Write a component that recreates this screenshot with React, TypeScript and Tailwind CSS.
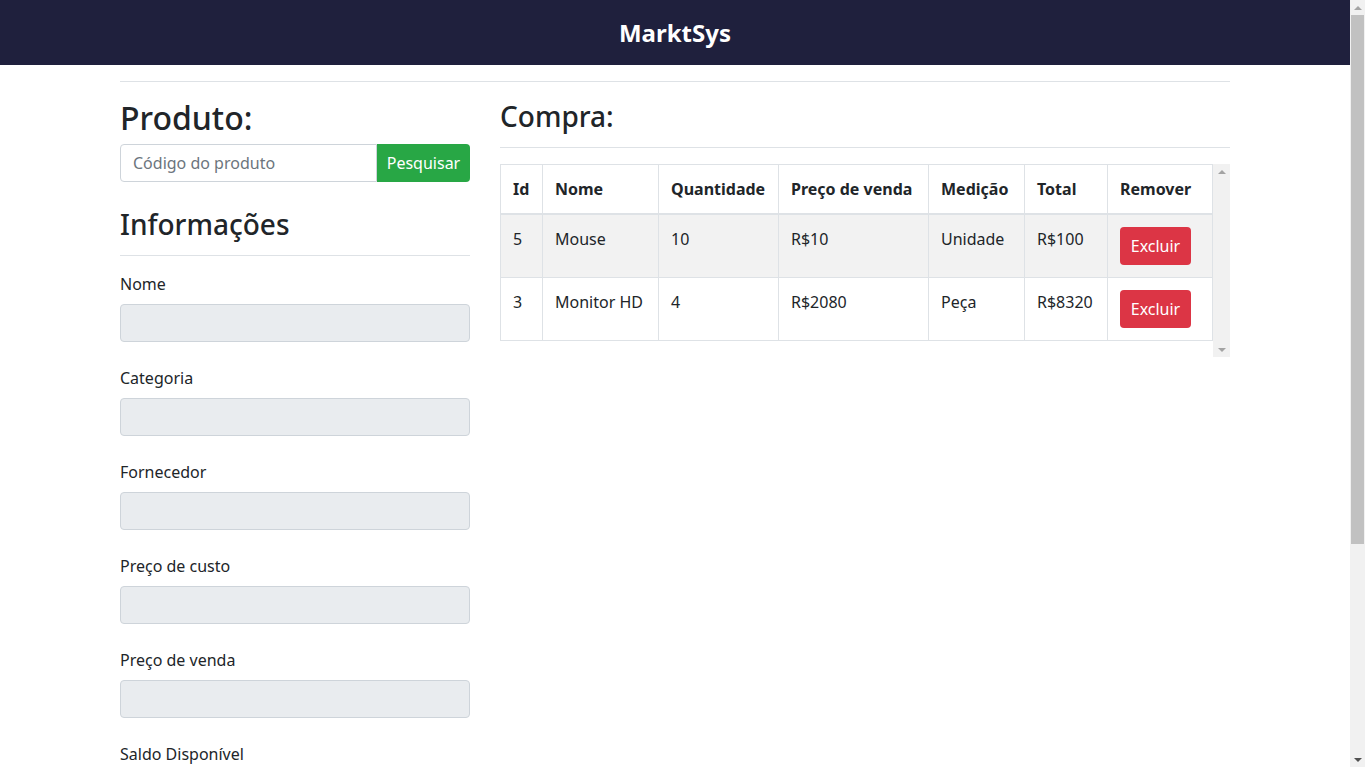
const campos = ['Nome', 'Categoria', 'Fornecedor', 'Preço de custo', 'Preço de venda', 'Saldo Disponível'];

const itens = [
  { id: 5, nome: 'Mouse', qtd: 10, preco: 'R$10', medicao: 'Unidade', total: 'R$100' },
  { id: 3, nome: 'Monitor HD', qtd: 4, preco: 'R$2080', medicao: 'Peça', total: 'R$8320' },
];

// barra de rolagem clássica (o navegador headless esconde a nativa)
function Scrollbar({ thumb, dark }: { thumb?: boolean; dark?: boolean }) {
  return (
    <div className="w-full h-full bg-[#f1f1f1] flex flex-col items-center">
      <div className="h-[15px] flex items-center justify-center">
        <div className="w-0 h-0 border-x-[4px] border-x-transparent border-b-[4px] border-b-[#a3a3a3]" />
      </div>
      <div className="flex-1 w-full px-px">
        {thumb && <div className="h-[529px] bg-[#c1c1c1]" />}
      </div>
      <div className="h-[15px] flex items-center justify-center">
        <div className={`w-0 h-0 border-x-[4px] border-x-transparent border-t-[4px] ${dark ? 'border-t-[#505050]' : 'border-t-[#a3a3a3]'}`} />
      </div>
    </div>
  );
}

function App() {
  return (
    <div className="h-screen flex overflow-hidden bg-white text-[#212529] font-['Noto_Sans',sans-serif]">
      <div className="flex-1 overflow-hidden">
        <header className="h-[65px] bg-[#1f203d] flex items-center justify-center">
          <h1 className="text-[24px] font-bold text-white">MarktSys</h1>
        </header>

        <div className="w-[1110px] mx-auto">
          <hr className="mt-4 border-t border-[#dee2e6]" />

          <div className="flex gap-[30px]">
            {/* coluna do produto */}
            <div className="w-[350px] shrink-0">
              <h2 className="mt-[17px] text-[32px] leading-[38px] font-medium">Produto:</h2>
              <div className="flex mt-[7px]">
                <input
                  placeholder="Código do produto"
                  className="w-[257px] h-[38px] px-3 border border-[#ced4da] rounded-l-[4px] text-base placeholder:text-[#6c757d] outline-none"
                />
                <button className="w-[93px] h-[38px] bg-[#28a745] text-white rounded-r-[4px] text-base">Pesquisar</button>
              </div>

              <h3 className="mt-[25px] text-[28px] leading-[34px] font-medium">Informações</h3>
              <hr className="mt-[14px] border-t border-[#dee2e6]" />

              <div className="mt-[16px] flex flex-col gap-6">
                {campos.map((c) => (
                  <div key={c}>
                    <label className="block text-base leading-6 mb-2">{c}</label>
                    <input
                      disabled
                      className="w-full h-[38px] bg-[#e9ecef] border border-[#ced4da] rounded-[4px]"
                    />
                  </div>
                ))}
              </div>
            </div>

            {/* coluna da compra */}
            <div className="w-[730px]">
              <h3 className="mt-[17px] text-[28px] leading-[34px] font-medium">Compra:</h3>
              <hr className="mt-[14px] border-t border-[#dee2e6]" />

              <div className="mt-4 h-[193px] flex">
                <div className="w-[713px] overflow-hidden">
                  <table className="border-collapse text-base w-[712px] table-fixed">
                    <colgroup>
                      <col className="w-[42px]" />
                      <col className="w-[116px]" />
                      <col className="w-[120px]" />
                      <col className="w-[150px]" />
                      <col className="w-[96px]" />
                      <col className="w-[83px]" />
                      <col className="w-[105px]" />
                    </colgroup>
                    <thead>
                      <tr>
                        {['Id', 'Nome', 'Quantidade', 'Preço de venda', 'Medição', 'Total', 'Remover'].map((h) => (
                          <th key={h} className="text-left font-bold p-3 leading-6 border border-[#dee2e6] border-b-2 whitespace-nowrap">
                            {h}
                          </th>
                        ))}
                      </tr>
                    </thead>
                    <tbody>
                      {itens.map((it, i) => (
                        <tr key={it.id} className={i % 2 === 0 ? 'bg-[#f2f2f2]' : ''}>
                          <td className="p-3 align-top leading-6 border border-[#dee2e6]">{it.id}</td>
                          <td className="p-3 align-top leading-6 border border-[#dee2e6]">{it.nome}</td>
                          <td className="p-3 align-top leading-6 border border-[#dee2e6]">{it.qtd}</td>
                          <td className="p-3 align-top leading-6 border border-[#dee2e6]">{it.preco}</td>
                          <td className="p-3 align-top leading-6 border border-[#dee2e6]">{it.medicao}</td>
                          <td className="p-3 align-top leading-6 border border-[#dee2e6]">{it.total}</td>
                          <td className="p-3 align-top leading-6 border border-[#dee2e6]">
                            <button className="h-[38px] w-[71px] bg-[#dc3545] text-white rounded-[4px]">Excluir</button>
                          </td>
                        </tr>
                      ))}
                    </tbody>
                  </table>
                </div>
                <div className="w-[17px]">
                  <Scrollbar />
                </div>
              </div>
            </div>
          </div>
        </div>
      </div>
      <div className="w-[15px] shrink-0">
        <Scrollbar thumb dark />
      </div>
    </div>
  );
}

export default App;
